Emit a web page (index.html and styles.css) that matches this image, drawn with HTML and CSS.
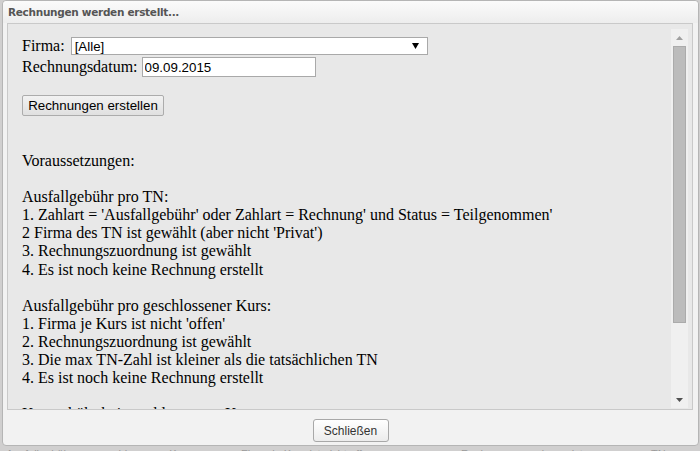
FILE: index.html
```html
<!DOCTYPE html>
<html lang="de">
<head>
<meta charset="utf-8">
<title>Rechnungen werden erstellt...</title>
<link rel="stylesheet" href="styles.css">
</head>
<body>
<div class="page">
  <div class="dialog">
    <div class="titlebar">Rechnungen werden erstellt...</div>
    <div class="content">
      <div class="scrollarea">
        <div class="row row-firma">
          <label class="lbl" for="firma">Firma:</label>
          <span class="select-wrap">
            <select id="firma" class="select"><option>[Alle]</option></select>
            <svg class="select-arrow" width="7" height="6" viewBox="0 0 7 6"><path d="M0 0h7L3.5 6z" fill="#000"/></svg>
          </span>
        </div>
        <div class="row row-datum">
          <label class="lbl" for="datum">Rechnungsdatum:</label>
          <input id="datum" class="input" type="text" value="09.09.2015">
        </div>
        <button class="btn-create" type="button">Rechnungen erstellen</button>
        <div class="info">Voraussetzungen:

Ausfallgebühr pro TN:
1. Zahlart = 'Ausfallgebühr' oder Zahlart = Rechnung' und Status = Teilgenommen'
2 Firma des TN ist gewählt (aber nicht 'Privat')
3. Rechnungszuordnung ist gewählt
4. Es ist noch keine Rechnung erstellt

Ausfallgebühr pro geschlossener Kurs:
1. Firma je Kurs ist nicht 'offen'
2. Rechnungszuordnung ist gewählt
3. Die max TN-Zahl ist kleiner als die tatsächlichen TN
4. Es ist noch keine Rechnung erstellt

Kursgebühr bei geschlossenem Kurs:</div>
      </div>
      <div class="scrollbar">
        <div class="sb-btn"><svg width="7" height="4" viewBox="0 0 7 4"><path d="M3.5 0L7 4H0z" fill="#a0a0a0"/></svg></div>
        <div class="sb-thumb"></div>
        <div class="sb-track"></div>
        <div class="sb-btn"><svg width="7" height="4" viewBox="0 0 7 4"><path d="M0 0h7L3.5 4z" fill="#505050"/></svg></div>
      </div>
    </div>
    <div class="footer">
      <button class="btn-close" type="button">Schließen</button>
    </div>
  </div>
  <div class="under">
    <span class="u1">Ausfallgebühr pro geschlossener Kurs</span>
    <span class="u2">Firma je Kurs ist nicht offen</span>
    <span class="u3">Rechnungszuordnung ist</span>
    <span class="u4">TN</span>
  </div>
</div>
</body>
</html>
```
FILE: styles.css
```css
html, body {
  margin: 0;
  padding: 0;
}
body {
  background: #d6d6d6;
  width: 700px;
  height: 451px;
  overflow: hidden;
}
.page {
  width: 700px;
  height: 451px;
  display: flex;
  flex-direction: column;
  background: #d0cfcf;
}
.dialog {
  margin-left: 2px;
  width: 695px;
  height: 444px;
  border: 1px solid #b5b5b5;
  border-radius: 4px;
  background: #f2f2f2;
  display: flex;
  flex-direction: column;
  flex: none;
}
.titlebar {
  height: 22px;
  padding-left: 5px;
  box-sizing: border-box;
  padding-top: 5px;
  font-family: "DejaVu Sans", sans-serif;
  font-weight: bold;
  font-size: 10.5px;
  letter-spacing: -0.3px;
  color: #555;
  background: linear-gradient(#fbfbfb, #ededed);
  border-radius: 4px 4px 0 0;
}
.content {
  margin: 0 5px 0 4px;
  height: 387px;
  box-sizing: border-box;
  border: 1px solid #c9c9c9;
  background: #e8e8e8;
  display: flex;
  flex: none;
}
.scrollarea {
  flex: 1;
  overflow: hidden;
  padding: 13px 0 0 14px;
  font-family: "Liberation Serif", "Times New Roman", serif;
  font-size: 16px;
  color: #000;
}
.row {
  display: flex;
  align-items: center;
  white-space: nowrap;
}
.row-firma {
  height: 18px;
}
.row-datum {
  height: 20px;
  margin-top: 2px;
}
.lbl {
  margin-right: 4px;
}
.select-wrap {
  position: relative;
  display: block;
  margin-left: 2px;
}
.select {
  appearance: none;
  -webkit-appearance: none;
  display: block;
  width: 357px;
  height: 18px;
  box-sizing: border-box;
  margin: 0;
  border: 1px solid #a9a9a9;
  border-radius: 0;
  background: #fff;
  padding: 0 0 0 3px;
  font-family: "Liberation Sans", Arial, sans-serif;
  font-size: 13.33px;
  color: #000;
  outline: none;
}
.select-arrow {
  position: absolute;
  right: 9px;
  top: 6px;
}
.input {
  display: block;
  width: 174px;
  height: 20px;
  box-sizing: border-box;
  margin: 0;
  border: 1px solid #a9a9a9;
  padding: 0 2px;
  font-family: "Liberation Sans", Arial, sans-serif;
  font-size: 13.33px;
  color: #000;
  background: #fff;
  outline: none;
}
.btn-create {
  display: block;
  margin: 18px 0 0 0;
  width: 142px;
  height: 21px;
  box-sizing: border-box;
  padding: 0;
  border: 1px solid #acacac;
  border-radius: 2px;
  background: linear-gradient(#f2f2f2, #e0e0e0);
  font-family: "Liberation Sans", Arial, sans-serif;
  font-size: 13.33px;
  color: #000;
}
.info {
  margin-top: 36px;
  white-space: pre;
  line-height: 18.1px;
}
.scrollbar {
  width: 17px;
  margin: 5px 4px 1px 0;
  background: #f0f0f0;
  display: flex;
  flex-direction: column;
  flex: none;
}
.sb-btn {
  height: 17px;
  display: flex;
  align-items: center;
  justify-content: center;
  flex: none;
}
.sb-thumb {
  margin: 0 2px;
  height: 277px;
  box-sizing: border-box;
  background: #bcbcbc;
  border: 1px solid #ababab;
  flex: none;
}
.sb-track {
  flex: 1;
}
.footer {
  flex: 1;
  display: flex;
  justify-content: center;
  align-items: flex-start;
  padding-top: 9px;
}
.btn-close {
  width: 76px;
  height: 23px;
  box-sizing: border-box;
  padding: 0;
  border: 1px solid #a8a8a8;
  border-radius: 3px;
  background: linear-gradient(#ffffff, #ececec);
  font-family: "Liberation Sans", Arial, sans-serif;
  font-size: 12px;
  color: #333;
}
.under {
  flex: 1;
  display: flex;
  overflow: hidden;
  font-family: "Liberation Sans", Arial, sans-serif;
  font-size: 11px;
  line-height: 11px;
  color: #9a9a9a;
  padding-top: 3px;
}
.under span {
  white-space: nowrap;
  display: block;
}
.u1 { margin-left: 6px; width: 175px; }
.u2 { margin-left: 60px; width: 130px; }
.u3 { margin-left: 90px; width: 140px; }
.u4 { margin-left: 50px; }
```
